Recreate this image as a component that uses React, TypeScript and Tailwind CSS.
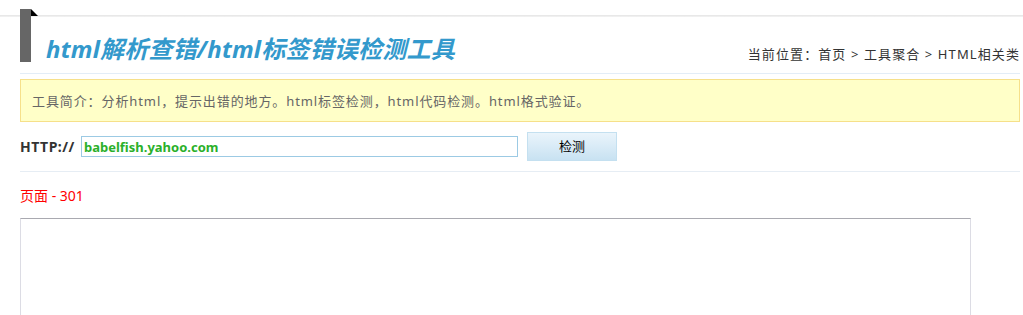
import React from "react";

const font = { fontFamily: '"Noto Sans","Noto Sans CJK SC",sans-serif' };

export default function App() {
  return (
    <div className="relative w-[1023px] h-[315px] overflow-hidden bg-white" style={font}>
      <div className="absolute left-0 right-0 top-[15px] h-[2px] bg-gradient-to-b from-[#e4e4e4] to-[#f4f4f4]" />
      <div className="relative ml-[20px] w-[1000px]">
        <div className="h-[9px]" />
        <div className="flex h-[65px] border-b border-[#e3edf7]">
          <div className="relative w-[11px] h-[53px] bg-[#666666]">
            <svg className="absolute left-[11px] top-0" width="7" height="8" viewBox="0 0 7 8">
              <polygon points="0,0 7,7 0,7" fill="#000" />
            </svg>
          </div>
          <div className="flex-1 flex items-end justify-between pb-[9px]">
            <h1 className="ml-[15px] text-[24px] leading-[30px] font-bold italic text-[#3399cc] tracking-[0.2px]">
              html解析查错/html标签错误检测工具
            </h1>
            <div className="text-[13px] leading-[18px] text-[#333] pb-[1px] tracking-[1.1px]">
              当前位置：首页 &gt; 工具聚合 &gt; HTML相关类
            </div>
          </div>
        </div>
        <div className="mt-[5px] h-[43px] bg-[#ffffc8] border border-[#f6e08a] flex items-center pl-[11px] pt-[3px] text-[13px] text-[#666] tracking-[0.9px]">
          工具简介：分析html，提示出错的地方。html标签检测，html代码检测。html格式验证。
        </div>
        <div className="mt-[10px] flex items-center h-[29px]">
          <span className="text-[14px] font-bold text-[#333] w-[61px] leading-[20px] tracking-[0.5px]">HTTP://</span>
          <div className="w-[437px] h-[21px] border border-[#9ccae4] flex items-center pl-[2px] text-[13px] font-bold text-[#2ab02a] leading-[18px]">
            babelfish.yahoo.com
          </div>
          <button className="ml-[9px] w-[90px] h-[29px] border border-[#c4e0f0] bg-gradient-to-b from-[#eaf4fb] to-[#c8e2f2] text-[13px] text-black">
            检测
          </button>
        </div>
        <div className="mt-[10px] h-px bg-[#e6edf4]" />
        <div className="mt-[14px] text-[14px] leading-[20px] text-[#ff0000]">页面 - 301</div>
        <div className="mt-[12px] w-[951px] h-[200px] border border-[#dcdce4] border-t-[#a9a9b0]" />
      </div>
    </div>
  );
}
